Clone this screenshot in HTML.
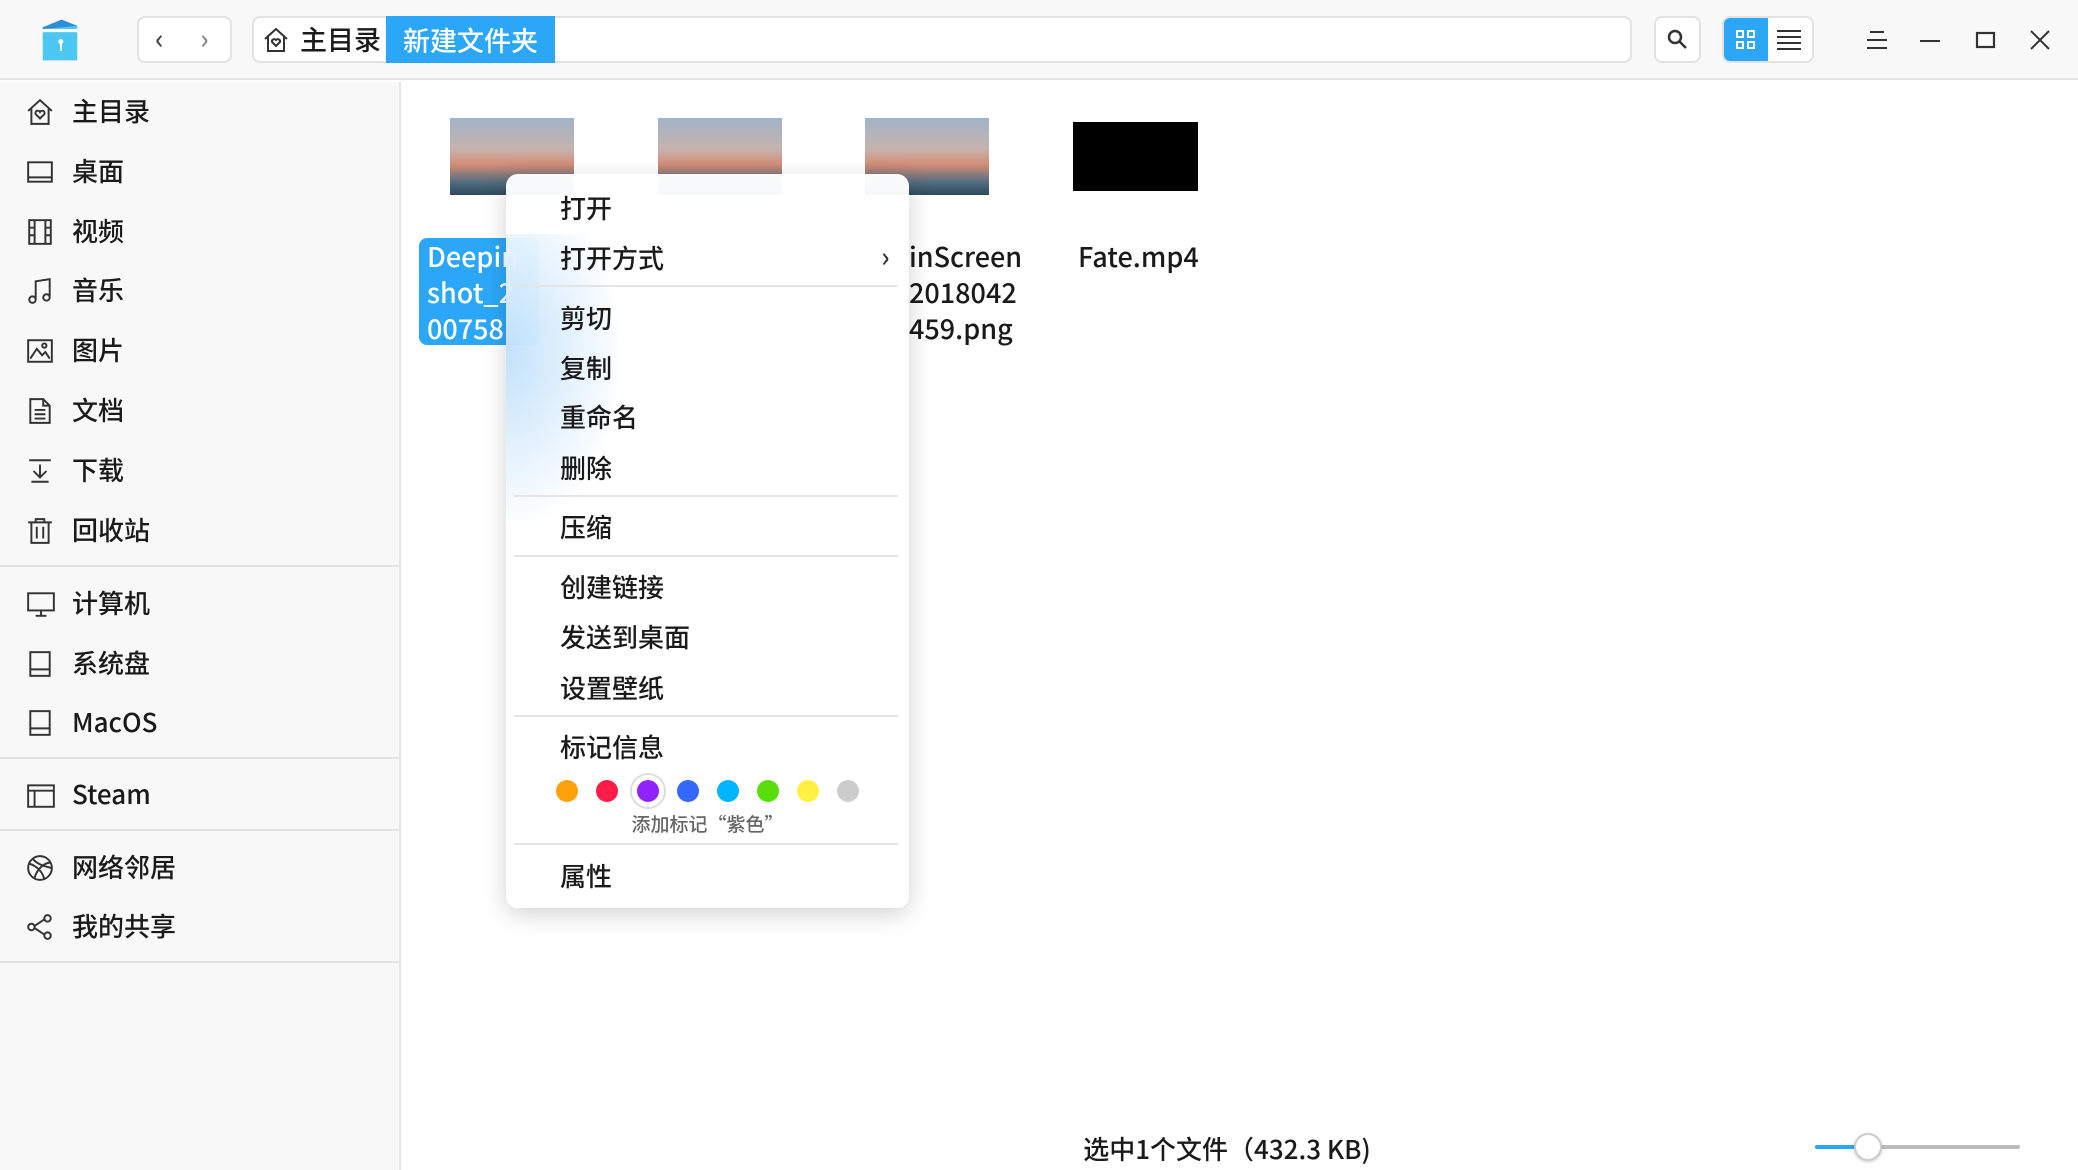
<!DOCTYPE html>
<html><head><meta charset="utf-8"><style>
*{margin:0;padding:0;box-sizing:border-box}
body{width:2078px;height:1170px;overflow:hidden;background:#fff;font-family:"Noto Sans CJK SC","Liberation Sans",sans-serif;color:#1a1a1a;position:relative;font-weight:500}
.abs{position:absolute}
#top{left:0;top:0;width:2078px;height:80px;background:#f8f8f8;border-bottom:2px solid #e6e6e6}
#side{left:0;top:82px;width:401px;height:1088px;background:#f8f8f8;border-right:2px solid #e6e6e6}
.box{border:2px solid #e2e2e2;border-radius:8px;background:#fff}
.si{position:absolute;left:0;width:400px;height:40px;font-size:26px;line-height:40px}
.si span{position:absolute;left:72px}
.si svg{position:absolute;left:26px;top:7px}
.sep{position:absolute;left:0;width:400px;height:2px;background:#e3e3e3}
.thumb{position:absolute;width:124px;height:77px;background:linear-gradient(180deg,#9fb3c8 0%,#c7b3ae 40%,#d48d77 60%,#4c6a7f 85%,#2f4a5a 100%)}
.lbl{position:absolute;font-size:27px;line-height:36px}
#menu{left:506px;top:174px;width:403px;height:734px;background:rgba(255,255,255,.96);border-radius:12px;box-shadow:0 6px 24px rgba(0,0,0,.18)}
.mi{position:absolute;left:54px;font-size:26px;line-height:36px;color:#1a1a1a}
.ms{position:absolute;left:8px;width:384px;height:2px;background:#e4e4e4}
.dot{position:absolute;top:606px;width:22px;height:22px;border-radius:50%}
</style></head><body>
<div id="top" class="abs"></div>
<!-- logo -->
<svg class="abs" style="left:38px;top:18px" width="44" height="44" viewBox="0 0 28 28"><path d="M3 6 L15 1 L25 5 L25 27 L3 27Z" fill="#4cc7f2"/><path d="M3 6 L15 1 L25 5 L3 7Z" fill="#2f8dd8"/><rect x="3" y="7" width="22" height="2" fill="#fff"/><circle cx="14.5" cy="15" r="1.6" fill="#fff"/><rect x="14" y="15" width="1.2" height="6" fill="#fff"/></svg>
<div class="abs box" style="left:137px;top:16px;width:95px;height:47px"></div>
<div class="abs" style="left:155px;top:18px;font-size:28px;color:#444">‹</div>
<div class="abs" style="left:200px;top:18px;font-size:28px;color:#888">›</div>
<div class="abs box" style="left:252px;top:16px;width:1380px;height:47px"></div>
<svg class="abs" style="left:262px;top:26px" width="28" height="28" viewBox="0 0 28 28" fill="none" stroke="#333" stroke-width="2"><path d="M3 13 L14 3 L25 13 M6 11 V25 H22 V11"/><path d="M14 20 l-4-4 a2.3 2.3 0 0 1 4-2 a2.3 2.3 0 0 1 4 2z"/></svg>
<div class="abs" style="left:300px;top:21px;font-size:27px;line-height:36px">主目录</div>
<div class="abs" style="left:386px;top:16px;width:169px;height:47px;background:#2ca7f8;color:#fff;font-size:27px;line-height:47px;text-align:center">新建文件夹</div>
<div class="abs box" style="left:1654px;top:16px;width:47px;height:47px"></div>
<svg class="abs" style="left:1664px;top:26px" width="28" height="28" viewBox="0 0 28 28" fill="none" stroke="#333" stroke-width="2.5"><circle cx="11" cy="11" r="6"/><path d="M15.5 15.5 L22 22"/></svg>
<div class="abs box" style="left:1722px;top:16px;width:92px;height:47px;overflow:hidden"><div style="position:absolute;left:0;top:0;width:44px;height:45px;background:#2ca7f8"></div></div>
<svg class="abs" style="left:1734px;top:28px" width="24" height="24" viewBox="0 0 24 24" fill="none" stroke="#fff" stroke-width="2"><rect x="3" y="3" width="6" height="6"/><rect x="14" y="3" width="6" height="6"/><rect x="3" y="14" width="6" height="6"/><rect x="14" y="14" width="6" height="6"/></svg>
<svg class="abs" style="left:1776px;top:28px" width="26" height="24" viewBox="0 0 26 24" stroke="#333" stroke-width="2"><path d="M1 3H25M1 9H25M1 15H25M1 21H25"/></svg>
<svg class="abs" style="left:1866px;top:28px" width="22" height="24" viewBox="0 0 22 24" stroke="#333" stroke-width="2"><path d="M4 4H18M1 12H21M1 20H21"/></svg>
<svg class="abs" style="left:1918px;top:28px" width="24" height="24" stroke="#333" stroke-width="2"><path d="M2 13H22"/></svg>
<svg class="abs" style="left:1974px;top:28px" width="24" height="24" fill="none" stroke="#333" stroke-width="2.2"><rect x="3" y="5" width="17" height="14"/></svg>
<svg class="abs" style="left:2028px;top:28px" width="24" height="24" stroke="#333" stroke-width="2"><path d="M3 3L21 21M21 3L3 21"/></svg>

<div id="side" class="abs"></div>
<div class="abs" style="left:0;top:82px;width:400px">
<div class="si" style="top:9px"><svg width="28" height="28" viewBox="0 0 26 26" fill="none" stroke="#333" stroke-width="1.8"><path d="M2 12 L13 2 L24 12 M5 10 V24 H21 V10"/><path d="M13 19 l-4-4 a2.2 2.2 0 0 1 4-2 a2.2 2.2 0 0 1 4 2z"/></svg><span>主目录</span></div>
<div class="si" style="top:69px"><svg width="28" height="28" viewBox="0 0 26 26" fill="none" stroke="#333" stroke-width="1.8"><rect x="2" y="4" width="22" height="18"/><path d="M2 18H24"/></svg><span>桌面</span></div>
<div class="si" style="top:129px"><svg width="28" height="28" viewBox="0 0 26 26" fill="none" stroke="#333" stroke-width="1.8"><rect x="3" y="2" width="20" height="22"/><path d="M8 2V24M18 2V24M3 9H8M3 16H8M18 9H23M18 16H23"/></svg><span>视频</span></div>
<div class="si" style="top:188px"><svg width="28" height="28" viewBox="0 0 26 26" fill="none" stroke="#333" stroke-width="1.8"><path d="M9 20V4L22 2V18"/><circle cx="6" cy="21" r="3"/><circle cx="19" cy="19" r="3"/></svg><span>音乐</span></div>
<div class="si" style="top:248px"><svg width="28" height="28" viewBox="0 0 26 26" fill="none" stroke="#333" stroke-width="1.8"><rect x="2" y="3" width="22" height="20"/><path d="M4 20L10 11L15 17L18 14L22 20"/><circle cx="17" cy="8" r="2"/></svg><span>图片</span></div>
<div class="si" style="top:308px"><svg width="28" height="28" viewBox="0 0 26 26" fill="none" stroke="#333" stroke-width="1.8"><path d="M4 2H16L22 8V24H4Z M16 2V8H22 M8 12H18M8 16H18M8 20H18"/></svg><span>文档</span></div>
<div class="si" style="top:368px"><svg width="28" height="28" viewBox="0 0 26 26" fill="none" stroke="#333" stroke-width="1.8"><path d="M3 3H23M13 7V19M7 13L13 19L19 13M5 23H21"/></svg><span>下载</span></div>
<div class="si" style="top:428px"><svg width="28" height="28" viewBox="0 0 26 26" fill="none" stroke="#333" stroke-width="1.8"><path d="M2 5H24M9 5V2H17V5M5 5V24H21V5M10 9V20M16 9V20"/></svg><span>回收站</span></div>
</div>
<div class="sep" style="top:565px"></div>
<div class="abs" style="left:0;top:0;width:400px">
<div class="si" style="top:583px"><svg width="30" height="28" viewBox="0 0 28 26" fill="none" stroke="#333" stroke-width="1.8"><rect x="2" y="3" width="24" height="16"/><path d="M9 24H19M14 19V24"/></svg><span>计算机</span></div>
<div class="si" style="top:643px"><svg width="28" height="28" viewBox="0 0 26 26" fill="none" stroke="#333" stroke-width="1.8"><rect x="4" y="2" width="18" height="22"/><path d="M4 18H22"/></svg><span>系统盘</span></div>
<div class="si" style="top:702px"><svg width="28" height="28" viewBox="0 0 26 26" fill="none" stroke="#333" stroke-width="1.8"><rect x="4" y="2" width="18" height="22"/><path d="M4 18H22"/></svg><span>MacOS</span></div>
</div>
<div class="sep" style="top:757px"></div>
<div class="si" style="top:774px"><svg width="30" height="28" viewBox="0 0 28 26" fill="none" stroke="#333" stroke-width="1.8"><rect x="2" y="4" width="24" height="20"/><path d="M2 9H26M8 9V24"/></svg><span>Steam</span></div>
<div class="sep" style="top:829px"></div>
<div class="si" style="top:847px"><svg width="28" height="28" viewBox="0 0 26 26" fill="none" stroke="#333" stroke-width="1.8"><circle cx="13" cy="13" r="11"/><path d="M3 9C10 11 16 17 17 24M8 22C10 15 16 8 23 8M6 4C10 10 19 12 24 13"/></svg><span>网络邻居</span></div>
<div class="si" style="top:906px"><svg width="28" height="28" viewBox="0 0 26 26" fill="none" stroke="#333" stroke-width="1.8"><circle cx="20" cy="5" r="3"/><circle cx="5" cy="13" r="3"/><circle cx="20" cy="21" r="3"/><path d="M8 12L17 6M8 14L17 20"/></svg><span>我的共享</span></div>
<div class="sep" style="top:961px"></div>

<!-- files -->
<div class="thumb" style="left:450px;top:118px"></div>
<div class="thumb" style="left:658px;top:118px"></div>
<div class="thumb" style="left:865px;top:118px"></div>
<div class="abs" style="left:1073px;top:122px;width:125px;height:69px;background:#000"></div>
<div class="abs" style="left:419px;top:238px;width:120px;height:107px;background:#2ca7f8;border-radius:8px"></div>
<div class="lbl" style="left:427px;top:238px;color:#fff">Deepin<br>shot_2<br>00758</div>
<div class="lbl" style="left:909px;top:238px">inScreen<br>2018042<br>459.png</div>
<div class="lbl" style="left:1078px;top:238px">Fate.mp4</div>

<div id="menu" class="abs">
<div class="abs" style="left:0;top:60px;width:120px;height:300px;background:radial-gradient(ellipse at 0% 40%,rgba(120,190,245,.45),rgba(255,255,255,0) 70%)"></div>
<div class="mi" style="top:16px">打开</div>
<div class="mi" style="top:66px">打开方式</div>
<div class="abs" style="left:375px;top:62px;font-size:28px;color:#333">›</div>
<div class="ms" style="top:111px"></div>
<div class="mi" style="top:126px">剪切</div>
<div class="mi" style="top:176px">复制</div>
<div class="mi" style="top:225px">重命名</div>
<div class="mi" style="top:276px">删除</div>
<div class="ms" style="top:321px"></div>
<div class="mi" style="top:335px">压缩</div>
<div class="ms" style="top:381px"></div>
<div class="mi" style="top:395px">创建链接</div>
<div class="mi" style="top:445px">发送到桌面</div>
<div class="mi" style="top:496px">设置壁纸</div>
<div class="ms" style="top:541px"></div>
<div class="mi" style="top:555px">标记信息</div>
<div class="abs" style="left:124px;top:599px;width:36px;height:36px;border-radius:50%;border:2px solid #ddd"></div>
<div class="dot" style="left:50px;background:#ffa10d"></div>
<div class="dot" style="left:90px;background:#ff1c49"></div>
<div class="dot" style="left:131px;background:#9023fc"></div>
<div class="dot" style="left:171px;background:#3468ff"></div>
<div class="dot" style="left:211px;background:#00b5ff"></div>
<div class="dot" style="left:251px;background:#58df0a"></div>
<div class="dot" style="left:291px;background:#fef144"></div>
<div class="dot" style="left:331px;background:#cccccc"></div>
<div class="abs" style="left:0;width:403px;top:636px;text-align:center;font-size:19px;color:#666">添加标记“紫色”</div>
<div class="ms" style="top:669px"></div>
<div class="mi" style="top:684px">属性</div>
</div>

<div class="abs" style="left:1000px;width:454px;top:1131px;text-align:center;font-size:26px;line-height:36px">选中1个文件（432.3 KB)</div>
<div class="abs" style="left:1815px;top:1145px;width:205px;height:4px;background:#bbb;border-radius:2px"></div>
<div class="abs" style="left:1815px;top:1145px;width:53px;height:4px;background:#2ca7f8;border-radius:2px"></div>
<div class="abs" style="left:1854px;top:1133px;width:28px;height:28px;border-radius:50%;background:#fff;border:2px solid #ccc;box-shadow:0 1px 3px rgba(0,0,0,.2)"></div>
</body></html>
